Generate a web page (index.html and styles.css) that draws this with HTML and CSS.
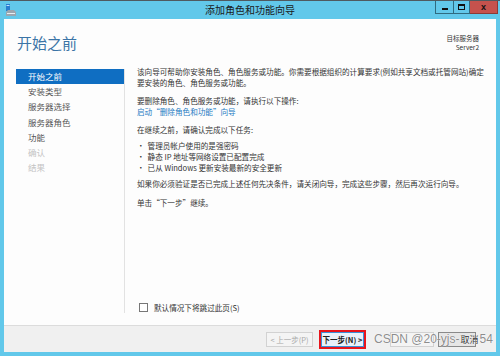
FILE: index.html
```html
<!DOCTYPE html>
<html lang="zh-CN">
<head>
    <meta charset="UTF-8">
    <meta name="viewport" content="width=device-width, initial-scale=1.0">
    <title>添加角色和功能向导</title>
    <link rel="stylesheet" href="styles.css">
</head>
<body>
    <div class="window">
        <div class="titlebar">
            <svg class="app-icon" width="12" height="13" viewBox="0 0 12 13">
                <rect x="1" y="0" width="4" height="7" fill="#2a7fd0"/>
                <rect x="1.5" y="1" width="3" height="1" fill="#bfe2ff"/>
                <path d="M1 8 L3 6 L9 6 L11 8 L11 12 L1 12 Z" fill="#9aa6b0"/>
                <rect x="2" y="9" width="8" height="1" fill="#e6eef4"/>
            </svg>
            <div class="title">添加角色和功能向导</div>
            <div class="controls">
                <div class="ctl ctl-min"><span></span></div>
                <div class="ctl ctl-max"><span></span></div>
                <div class="ctl ctl-close">x</div>
            </div>
        </div>
        <div class="content">
            <div class="page">
                <div class="header">
                    <h1 class="page-title">开始之前</h1>
                    <div class="target">
                        <div>目标服务器</div>
                        <div>Server2</div>
                    </div>
                </div>
                <div class="body">
                    <ul class="nav">
                        <li class="active">开始之前</li>
                        <li>安装类型</li>
                        <li>服务器选择</li>
                        <li>服务器角色</li>
                        <li>功能</li>
                        <li class="disabled">确认</li>
                        <li class="disabled">结果</li>
                    </ul>
                    <div class="text">
                        <p class="p-intro">该向导可帮助你安装角色、角色服务或功能。你需要根据组织的计算要求(例如共享文档或托管网站)确定要安装的角色、角色服务或功能。</p>
                        <p class="p-remove">要删除角色、角色服务或功能，请执行以下操作:<br><a href="#" class="link">启动“删除角色和功能”向导</a></p>
                        <p class="p-check">在继续之前，请确认完成以下任务:</p>
                        <ul class="tasks">
                            <li>管理员帐户使用的是强密码</li>
                            <li>静态 IP 地址等网络设置已配置完成</li>
                            <li>已从 Windows 更新安装最新的安全更新</li>
                        </ul>
                        <p class="p-verify">如果你必须验证是否已完成上述任何先决条件，请关闭向导，完成这些步骤，然后再次运行向导。</p>
                        <p class="p-next">单击“下一步”继续。</p>
                        <label class="skip">
                            <span class="box"></span>
                            默认情况下将跳过此页(S)
                        </label>
                    </div>
                </div>
            </div>
            <div class="footer">
                <button class="btn" disabled>&lt; 上一步(P)</button>
                <div class="mark">
                    <button class="btn btn-next">下一步(N) &gt;</button>
                </div>
                <button class="btn btn-install" disabled></button>
                <button class="btn btn-cancel"></button>
                <div class="watermark">CSDN @20-yjs-<span class="cancel-under">取消</span>54</div>
            </div>
        </div>
    </div>
</body>
</html>
```

FILE: styles.css
```css
body {
    margin: 0;
    padding: 0;
    width: 500px;
    height: 356px;
    overflow: hidden;
    font-family: "Noto Sans CJK SC", "Liberation Sans", sans-serif;
}
.window {
    width: 500px;
    height: 356px;
    box-sizing: border-box;
    background-color: #62c8ea;
    border-top: 1px solid #4f5a60;
    padding: 0 4px 4px 4px;
    display: flex;
    flex-direction: column;
}
.titlebar {
    height: 18px;
    display: flex;
    align-items: flex-start;
    position: relative;
    margin: 0 -4px;
}
.app-icon {
    margin: 3px 0 0 5px;
}
.title {
    position: absolute;
    left: 0;
    right: 0;
    top: 2px;
    text-align: center;
    font-size: 10px;
    line-height: 14px;
    color: #1a1a1a;
}
.controls {
    margin-left: auto;
    margin-right: 2px;
    display: flex;
    position: relative;
}
.ctl {
    height: 13px;
    box-sizing: border-box;
    border: 1px solid #2f6b80;
    border-top: none;
    display: flex;
    justify-content: center;
    align-items: center;
}
.ctl-min {
    width: 19px;
}
.ctl-min span {
    width: 6px;
    height: 2px;
    background-color: #111;
    margin-top: 4px;
}
.ctl-max {
    width: 16px;
    border-left: none;
}
.ctl-max span {
    width: 5px;
    height: 3px;
    border: 1px solid #111;
    border-top-width: 2px;
}
.ctl-close {
    width: 28px;
    border-left: none;
    background-color: #c6524d;
    border-color: #8c3a36;
    color: #111;
    font-family: "Liberation Sans", sans-serif;
    font-weight: bold;
    font-size: 9px;
    line-height: 10px;
}
.content {
    flex: 1;
    background-color: #fdfdfd;
    display: flex;
    flex-direction: column;
}
.page {
    flex: 1;
    display: flex;
    flex-direction: column;
    padding: 14px 10px 12px 12px;
}
.header {
    height: 33px;
    display: flex;
    justify-content: space-between;
    align-items: flex-start;
}
.page-title {
    margin: 0 0 0 1px;
    font-size: 15px;
    line-height: 20px;
    font-weight: normal;
    color: #3b74a6;
}
.target {
    margin: 1px 7px 0 0;
    text-align: right;
    font-size: 6.5px;
    line-height: 9px;
    color: #333;
}
.body {
    flex: 1;
    display: flex;
}
.nav {
    list-style: none;
    margin: 3px 0 0 0;
    padding: 0;
    width: 108px;
    border-right: 1px solid #e2e2e2;
}
.nav li {
    height: 15.2px;
    line-height: 15.2px;
    padding-left: 12px;
    font-size: 8.5px;
    color: #555;
}
.nav li.active {
    background-color: #0f6ec2;
    color: #fff;
}
.nav li.disabled {
    color: #c4c4c4;
}
.text {
    flex: 1;
    display: flex;
    flex-direction: column;
    padding-left: 12px;
    font-size: 7.6px;
    line-height: 11px;
    color: #333;
}
.text p {
    margin: 0;
}
.p-remove {
    margin-top: 7px !important;
}
.link {
    color: #1e7cc3;
    text-decoration: none;
}
.p-check {
    margin-top: 7px !important;
}
.tasks {
    list-style: none;
    margin: 5px 0 0 0;
    padding: 0;
}
.tasks li::before {
    content: "•";
    margin-right: 3px;
}
.p-verify {
    margin-top: 5px !important;
}
.p-next {
    margin-top: 8px !important;
}
.skip {
    margin-top: auto;
    display: flex;
    align-items: center;
    color: #333;
}
.box {
    width: 7px;
    height: 7px;
    border: 1px solid #777;
    background-color: #fff;
    margin: 0 6px 0 2px;
}
.footer {
    height: 27px;
    border-top: 1px solid #dcdcdc;
    background-color: #f0f0f0;
    display: flex;
    align-items: flex-start;
    padding: 6px 20px 0 0;
    box-sizing: border-box;
    position: relative;
}
.btn {
    height: 15px;
    padding: 0;
    box-sizing: border-box;
    border: 1px solid #adadad;
    background-color: #e6e6e6;
    font-family: "Noto Sans CJK SC", "Liberation Sans", sans-serif;
    font-size: 7.5px;
    line-height: 13px;
    color: #222;
}
.btn:disabled {
    background-color: #f4f4f4;
    border-color: #d2d2d2;
    color: #a8a8a8;
}
.footer > .btn:first-child {
    margin-left: auto;
    width: 47px;
}
.mark {
    margin: -2px 0 0 6px;
    border: 2px solid #e8141b;
    padding: 0;
}
.btn-next {
    display: block;
    width: 43px;
    border-color: #3c8fd6;
    background-color: #e9f1f9;
    font-weight: bold;
}
.btn-install {
    width: 44px;
    margin-left: 24px;
}
.btn-cancel {
    width: 38px;
    margin-left: 4px;
    border-color: #8a8a8a;
}
.watermark {
    position: absolute;
    left: 370px;
    top: 6px;
    font-family: "Liberation Sans", sans-serif;
    font-size: 12px;
    line-height: 15px;
    color: rgba(110, 110, 110, 0.8);
    text-shadow: 0 0 1px #fff, 0 0 1px #fff;
    pointer-events: none;
}
.cancel-under {
    font-family: "Noto Sans CJK SC", sans-serif;
    font-size: 9px;
    color: #333;
    margin: 0 1px;
}
```
